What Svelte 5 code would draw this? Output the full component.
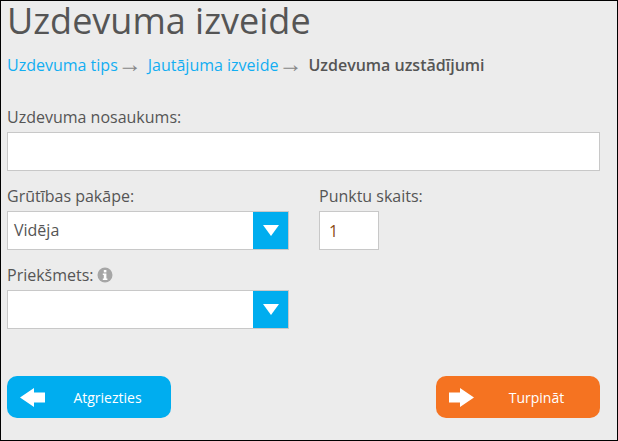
<script>
  let title = 'Uzdevuma izveide';
  let points = '1';
</script>

<div class="page">
  <h1>{title}</h1>

  <nav class="steps">
    <a href="#tips">Uzdevuma tips</a>
    <span class="arrow">→</span>
    <a href="#jautajums">Jautājuma izveide</a>
    <span class="arrow">→</span>
    <b>Uzdevuma uzstādījumi</b>
  </nav>

  <label class="lbl name-lbl" for="name">Uzdevuma nosaukums:</label>
  <input id="name" class="field name" type="text" />

  <div class="row">
    <div class="col-left">
      <div class="lbl">Grūtības pakāpe:</div>
      <div class="select">
        <span class="value">Vidēja</span>
        <span class="drop"><i></i></span>
      </div>
    </div>
    <div class="col-right">
      <label class="lbl" for="points">Punktu skaits:</label>
      <input id="points" class="field points" type="text" bind:value={points} />
    </div>
  </div>

  <div class="lbl subject-lbl">
    Priekšmets:
    <svg class="info" width="16" height="16" viewBox="0 0 16 16">
      <circle cx="8" cy="8" r="7.5" fill="#a6a6a6" />
      <rect x="6.8" y="3" width="2.6" height="2.4" fill="#fff" />
      <path d="M5.8 6.6h3.6v4.900h1v1.400H5.800v-1.400h1V8H5.800z" fill="#fff" />
    </svg>
  </div>
  <div class="select">
    <span class="value"></span>
    <span class="drop"><i></i></span>
  </div>

  <div class="actions">
    <button class="btn back">
      <svg width="25" height="19" viewBox="0 0 25 19"><path d="M0 9.500 14 0v4.500h11v10H14V19z" fill="#fff" /></svg>
      <span>Atgriezties</span>
    </button>
    <button class="btn next">
      <svg width="25" height="19" viewBox="0 0 25 19"><path d="M25 9.500 11 0v4.500H0v10h11V19z" fill="#fff" /></svg>
      <span>Turpināt</span>
    </button>
  </div>
</div>

<style>
  :global(body) {
    margin: 0;
    background: #ececec;
  }

  .page {
    box-sizing: border-box;
    width: 618px;
    height: 441px;
    border: 1px solid #000;
    background: #ececec;
    padding: 0 17px 0 6px;
    font-family: "Open Sans", sans-serif;
    color: #555;
    font-size: 16px;
  }

  h1 {
    margin: 0;
    font-size: 36px;
    font-weight: 400;
    line-height: 40px;
    color: #555;
  }

  .steps {
    display: flex;
    align-items: center;
    margin-top: 13px;
    line-height: 22px;
    white-space: nowrap;
  }

  .steps a {
    color: #12aef2;
    text-decoration: none;
  }

  .arrow {
    font-family: "Liberation Sans", sans-serif;
    font-size: 24px;
    color: #888;
    margin: -3px 6px 0 0;
  }

  .steps b {
    font-weight: 600;
  }

  .lbl {
    display: block;
    line-height: 22px;
  }

  .name-lbl {
    margin-top: 30px;
  }

  .field {
    box-sizing: border-box;
    display: block;
    border: 1px solid #c8c8c8;
    background: #fff;
    font: inherit;
    color: #8a4b14;
    outline: none;
  }

  .name {
    width: 593px;
    height: 39px;
    margin-top: 4px;
  }

  .row {
    display: flex;
    margin-top: 14px;
  }

  .col-left {
    width: 282px;
  }

  .col-right {
    margin-left: 30px;
  }

  .select {
    box-sizing: border-box;
    display: flex;
    justify-content: space-between;
    width: 282px;
    height: 39px;
    margin-top: 4px;
    border: 1px solid #c8c8c8;
    background: #fff;
  }

  .value {
    padding-left: 6px;
    line-height: 37px;
  }

  .drop {
    display: flex;
    align-items: center;
    justify-content: center;
    width: 35px;
    background: #00adef;
  }

  .drop i {
    width: 0;
    height: 0;
    border-left: 8.5px solid transparent;
    border-right: 8.5px solid transparent;
    border-top: 11px solid #fff;
  }

  .points {
    width: 60px;
    height: 39px;
    margin-top: 4px;
    padding-left: 9px;
  }

  .subject-lbl {
    display: flex;
    align-items: center;
    gap: 3px;
    margin-top: 14px;
  }

  .info {
    display: block;
  }

  .actions {
    display: flex;
    justify-content: space-between;
    width: 593px;
    margin-top: 47px;
  }

  .btn {
    display: flex;
    align-items: center;
    width: 164px;
    height: 42px;
    padding: 0 0 0 13px;
    border: 0;
    border-radius: 10px;
    color: #fff;
    font: 400 14px "Open Sans", sans-serif;
  }

  .btn span {
    flex: 1;
    text-align: center;
    padding-right: 1px;
  }

  .back {
    background: #00adef;
  }

  .next {
    background: #f57321;
  }
</style>
